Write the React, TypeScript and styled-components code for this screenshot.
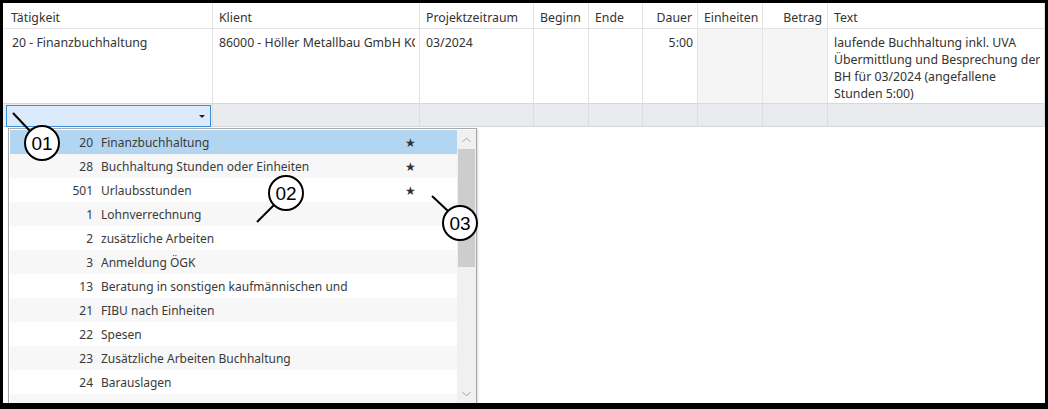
import React from "react";
import styled, { createGlobalStyle } from "styled-components";

const GlobalStyle = createGlobalStyle`
  html, body { margin: 0; padding: 0; background: #fff; }
  body { font-family: "Segoe UI", "Noto Sans", "Open Sans", sans-serif; }
  * { box-sizing: border-box; }
`;

const Frame = styled.div`
  position: relative;
  width: 1048px;
  height: 409px;
  border-style: solid;
  border-color: #000;
  border-width: 3px 3px 6px 3px;
  background: #fff;
  overflow: hidden;
  font-size: 12px;
  color: #333;
`;

const Grid = styled.div`
  display: grid;
  grid-template-columns: 210px 207px 114px 55px 54px 55px 65px 65px 1fr;
  grid-template-rows: 26px 75px 23px;
  font-size: 12.3px;
`;

const HeadCell = styled.div<{ $right?: boolean; $first?: boolean }>`
  display: flex;
  align-items: center;
  justify-content: ${(p) => (p.$right ? "flex-end" : "flex-start")};
  padding: 3px 5px 0 ${(p) => (p.$first ? "8px" : "6px")};
  border-right: 1px solid #e4e4e4;
  border-bottom: 1px solid #e4e4e4;
  white-space: nowrap;
  overflow: hidden;
  color: #333;
`;

const DataCell = styled.div<{ $right?: boolean; $readonly?: boolean; $first?: boolean }>`
  padding: 5px 4px 0 ${(p) => (p.$first ? "9px" : "6px")};
  text-align: ${(p) => (p.$right ? "right" : "left")};
  background: ${(p) => (p.$readonly ? "#f5f5f5" : "#fff")};
  border-right: 1px solid #e4e4e4;
  border-bottom: 1px solid #d8d8d8;
  white-space: nowrap;
  overflow: hidden;
  line-height: 17px;
  color: #333;
`;

const CellText = styled.span`
  display: block;
  overflow: hidden;
`;

const NewCell = styled.div`
  background: #e9ebee;
  border-right: 1px solid #dcdee2;
  border-bottom: 1px solid #d4d6da;
  padding: 1px 1px 0 3px;
`;

const Combo = styled.div`
  height: 22px;
  background: #dcebfc;
  border: 1px solid #3c8ddb;
  display: flex;
  align-items: center;
  justify-content: flex-end;
  padding-right: 5px;
`;

const Caret = styled.span`
  width: 0;
  height: 0;
  border-left: 3px solid transparent;
  border-right: 3px solid transparent;
  border-top: 3px solid #222;
`;

const Dropdown = styled.div`
  position: absolute;
  left: 5px;
  top: 125px;
  width: 469px;
  height: 276px;
  background: #fff;
  border: 1px solid #a8a8a8;
  box-shadow: 1px 1px 2px rgba(0, 0, 0, 0.15);
  display: flex;
  padding: 1px 0 0 1px;
`;

const List = styled.div`
  flex: 1;
  display: flex;
  flex-direction: column;
`;

const Item = styled.div<{ $selected?: boolean; $alt?: boolean }>`
  height: 24px;
  flex: none;
  display: grid;
  grid-template-columns: 83px 1fr 14px;
  column-gap: 8px;
  align-items: center;
  padding-right: 40px;
  background: ${(p) => (p.$selected ? "#b2d6f1" : p.$alt ? "#f7f7f7" : "#fff")};
  color: #3a3a3a;
  white-space: nowrap;
`;

const Num = styled.span`
  text-align: right;
`;

const Star = styled.span`
  font-size: 12px;
  color: #333;
  text-align: center;
`;

const Filler = styled.div`
  flex: 1;
  background: #f7f7f7;
`;

const Scrollbar = styled.div`
  width: 19px;
  flex: none;
  background: #f0f0f0;
  display: flex;
  flex-direction: column;
  align-items: center;
`;

const Arrow = styled.div`
  height: 19px;
  width: 19px;
  display: flex;
  align-items: center;
  justify-content: center;
  flex: none;
`;

const Thumb = styled.div`
  width: 17px;
  height: 118px;
  background: #cdcdcd;
  flex: none;
`;

const Track = styled.div`
  flex: 1;
`;

const CalloutSvg = styled.svg`
  position: absolute;
  left: 0;
  top: 0;
  overflow: visible;
  pointer-events: none;
`;

type CalloutProps = {
  label: string;
  x: number;
  y: number;
  lx1: number;
  ly1: number;
  lx2: number;
  ly2: number;
};

const Callout = ({ label, x, y, lx1, ly1, lx2, ly2 }: CalloutProps) => (
  <CalloutSvg width={1042} height={400} viewBox="3 3 1042 400">
    <line x1={lx1} y1={ly1} x2={lx2} y2={ly2} stroke="#000" strokeWidth={2} />
    <circle cx={x} cy={y} r={17} fill="#fff" stroke="#000" strokeWidth={2} />
    <text
      x={x}
      y={y + 7}
      textAnchor="middle"
      fontFamily='"Liberation Sans", Arial, sans-serif'
      fontSize={19}
      fill="#000"
    >
      {label}
    </text>
  </CalloutSvg>
);

const ChevronUp = () => (
  <svg width="9" height="6" viewBox="0 0 9 6">
    <path d="M0.5 5 L4.5 1 L8.5 5" fill="none" stroke="#a3a3a3" strokeWidth="1" />
  </svg>
);

const ChevronDown = () => (
  <svg width="9" height="6" viewBox="0 0 9 6">
    <path d="M0.5 1 L4.5 5 L8.5 1" fill="none" stroke="#a3a3a3" strokeWidth="1" />
  </svg>
);

const headers: { label: string; right?: boolean }[] = [
  { label: "Tätigkeit" },
  { label: "Klient" },
  { label: "Projektzeitraum" },
  { label: "Beginn" },
  { label: "Ende" },
  { label: "Dauer", right: true },
  { label: "Einheiten" },
  { label: "Betrag", right: true },
  { label: "Text" },
];

const items: { num: string; label: string; fav?: boolean }[] = [
  { num: "20", label: "Finanzbuchhaltung", fav: true },
  { num: "28", label: "Buchhaltung Stunden oder Einheiten", fav: true },
  { num: "501", label: "Urlaubsstunden", fav: true },
  { num: "1", label: "Lohnverrechnung" },
  { num: "2", label: "zusätzliche Arbeiten" },
  { num: "3", label: "Anmeldung ÖGK" },
  { num: "13", label: "Beratung in sonstigen kaufmännischen und" },
  { num: "21", label: "FIBU nach Einheiten" },
  { num: "22", label: "Spesen" },
  { num: "23", label: "Zusätzliche Arbeiten Buchhaltung" },
  { num: "24", label: "Barauslagen" },
];

const textLines = [
  "laufende Buchhaltung inkl. UVA",
  "Übermittlung und Besprechung der",
  "BH für 03/2024 (angefallene",
  "Stunden 5:00)",
];

export default function App() {
  return (
    <>
      <GlobalStyle />
      <Frame>
        <Grid>
          {headers.map((h, i) => (
            <HeadCell key={h.label} $right={h.right} $first={i === 0}>
              {h.label}
            </HeadCell>
          ))}
          <DataCell $first>
            <CellText>20 - Finanzbuchhaltung</CellText>
          </DataCell>
          <DataCell>
            <CellText>86000 - Höller Metallbau GmbH KG</CellText>
          </DataCell>
          <DataCell>
            <CellText>03/2024</CellText>
          </DataCell>
          <DataCell />
          <DataCell />
          <DataCell $right>
            <CellText>5:00</CellText>
          </DataCell>
          <DataCell $readonly />
          <DataCell $readonly />
          <DataCell>
            {textLines.map((l) => (
              <CellText key={l}>{l}</CellText>
            ))}
          </DataCell>
          <NewCell>
            <Combo>
              <Caret />
            </Combo>
          </NewCell>
          {Array.from({ length: 8 }).map((_, i) => (
            <NewCell key={i} />
          ))}
        </Grid>

        <Dropdown>
          <List>
            {items.map((it, i) => (
              <Item key={it.num} $selected={i === 0} $alt={i % 2 === 1}>
                <Num>{it.num}</Num>
                <span>{it.label}</span>
                <Star>{it.fav ? "★" : ""}</Star>
              </Item>
            ))}
            <Filler />
          </List>
          <Scrollbar>
            <Arrow>
              <ChevronUp />
            </Arrow>
            <Thumb />
            <Track />
            <Arrow>
              <ChevronDown />
            </Arrow>
          </Scrollbar>
        </Dropdown>

        <Callout label="01" x={42} y={143} lx1={13} ly1={113} lx2={30} ly2={131} />
        <Callout label="02" x={286} y={193} lx1={257} ly1={222} lx2={274} ly2={205} />
        <Callout label="03" x={460} y={223} lx1={432} ly1={196} lx2={448} ly2={211} />
      </Frame>
    </>
  );
}
